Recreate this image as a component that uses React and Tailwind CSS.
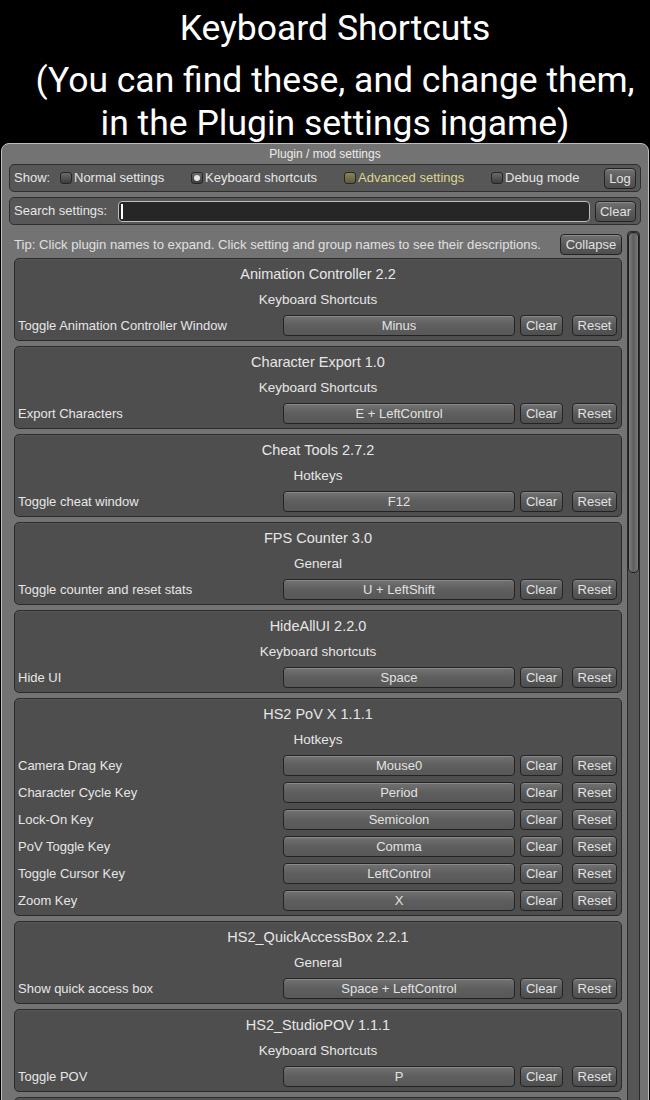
import React from "react";

const cards = [
  { title: "Animation Controller 2.2", group: "Keyboard Shortcuts", rows: [["Toggle Animation Controller Window", "Minus"]] },
  { title: "Character Export 1.0", group: "Keyboard Shortcuts", rows: [["Export Characters", "E + LeftControl"]] },
  { title: "Cheat Tools 2.7.2", group: "Hotkeys", rows: [["Toggle cheat window", "F12"]] },
  { title: "FPS Counter 3.0", group: "General", rows: [["Toggle counter and reset stats", "U + LeftShift"]] },
  { title: "HideAllUI 2.2.0", group: "Keyboard shortcuts", rows: [["Hide UI", "Space"]] },
  {
    title: "HS2 PoV X 1.1.1",
    group: "Hotkeys",
    rows: [
      ["Camera Drag Key", "Mouse0"],
      ["Character Cycle Key", "Period"],
      ["Lock-On Key", "Semicolon"],
      ["PoV Toggle Key", "Comma"],
      ["Toggle Cursor Key", "LeftControl"],
      ["Zoom Key", "X"],
    ],
  },
  { title: "HS2_QuickAccessBox 2.2.1", group: "General", rows: [["Show quick access box", "Space + LeftControl"]] },
  { title: "HS2_StudioPOV 1.1.1", group: "Keyboard Shortcuts", rows: [["Toggle POV", "P"]] },
];

function Btn({ children, className = "" }) {
  return (
    <div
      className={
        "flex h-[21px] shrink-0 items-center justify-center rounded-[4px] border border-[#232323] bg-gradient-to-b from-[#727272] via-[#5a5a5a] to-[#4e4e4e] text-[13px] leading-none text-[#e2e2e2] shadow-[inset_0_1px_0_rgba(255,255,255,0.18)] " +
        className
      }
    >
      {children}
    </div>
  );
}

function Radio({ checked, yellow }) {
  return (
    <div
      className={
        "mr-[2px] flex h-[12px] w-[12px] shrink-0 items-center justify-center rounded-[3px] border border-[#262626] " +
        (yellow
          ? "bg-gradient-to-b from-[#8a8459] to-[#5f5a3a]"
          : "bg-gradient-to-b from-[#6a6a6a] to-[#3e3e3e]")
      }
    >
      {checked && <div className="h-[6px] w-[6px] rounded-full bg-[#e6e6e6]" />}
    </div>
  );
}

function Card({ card }) {
  return (
    <div className="flex shrink-0 flex-col rounded-[5px] border border-[#2b2b2b] bg-[#4e4e4e] pt-[3px] pb-[1px] shadow-[inset_0_1px_0_rgba(255,255,255,0.06)]">
      <div className="flex h-[26px] items-center justify-center text-[14.5px] text-[#e6e6e6]">{card.title}</div>
      <div className="flex h-[24px] items-center justify-center text-[13.5px] text-[#e6e6e6]">{card.group}</div>
      {card.rows.map(([label, key]) => (
        <div key={label} className="flex h-[27px] items-center pl-[3px] pr-[4px]">
          <div className="flex-1 text-[13px] text-[#e6e6e6]">{label}</div>
          <Btn className="w-[232px] from-[#7c7c7c] via-[#5e5e5e] to-[#585858]">{key}</Btn>
          <Btn className="ml-[5px] w-[43px]">Clear</Btn>
          <Btn className="ml-[9px] w-[45px]">Reset</Btn>
        </div>
      ))}
    </div>
  );
}

export default function App() {
  return (
    <div
      className="h-[1100px] w-[650px] overflow-hidden bg-black"
      style={{ fontFamily: '"Liberation Sans", Arial, sans-serif' }}
    >
      <div
        className="flex h-[143px] flex-col items-center pl-[20px] pt-[6px] text-[35.5px] leading-[44px] text-white"
        style={{ fontFamily: 'Roboto, "Liberation Sans", sans-serif' }}
      >
        <div>Keyboard Shortcuts</div>
        <div className="mt-[8px] whitespace-nowrap">(You can find these, and change them,</div>
        <div className="-mt-[1px] whitespace-nowrap">in the Plugin settings ingame)</div>
      </div>

      <div className="mx-[1px] flex flex-col rounded-t-[8px] border border-[#bdbdbd] bg-[#737373] px-[7px] pb-[20px]">
        <div className="flex h-[20px] shrink-0 items-center justify-center text-[12px] text-[#ececec]">Plugin / mod settings</div>

        <div className="flex h-[28px] shrink-0 items-center rounded-[5px] border border-[#2f2f2f] bg-[#575757] pl-[4px] pr-[4px] text-[13px] text-[#e6e6e6]">
          <div className="w-[46px]">Show:</div>
          <div className="flex w-[131px] items-center">
            <Radio />
            Normal settings
          </div>
          <div className="flex w-[153px] items-center">
            <Radio checked />
            Keyboard shortcuts
          </div>
          <div className="flex w-[147px] items-center text-[#dcd68e]">
            <Radio yellow />
            Advanced settings
          </div>
          <div className="flex flex-1 items-center">
            <Radio />
            Debug mode
          </div>
          <Btn className="w-[32px]">Log</Btn>
        </div>

        <div className="mt-[5px] flex h-[28px] shrink-0 items-center rounded-[5px] border border-[#2f2f2f] bg-[#575757] pl-[4px] pr-[4px] text-[13px] text-[#e6e6e6]">
          <div className="w-[104px]">Search settings:</div>
          <div className="flex h-[21px] flex-1 items-center rounded-[4px] border border-[#bcbcbc] bg-[#262626] pl-[2px]">
            <div className="h-[15px] w-[2px] bg-white" />
          </div>
          <Btn className="ml-[5px] w-[41px]">Clear</Btn>
        </div>

        <div className="mt-[6px] flex">
          <div className="flex flex-1 flex-col pl-[5px]">
            <div className="flex h-[27px] shrink-0 items-center">
              <div className="flex-1 text-[13.15px] text-[#e0e0e0]">
                Tip: Click plugin names to expand. Click setting and group names to see their descriptions.
              </div>
              <Btn className="w-[62px]">Collapse</Btn>
            </div>
            <div className="flex flex-col gap-[5px]">
              {cards.map((c) => (
                <Card key={c.title} card={c} />
              ))}
              <Card card={{ title: "", group: "", rows: [] }} />
            </div>
          </div>
          <div className="ml-[5px] mr-[1px] flex w-[13px] flex-col rounded-t-[4px] border border-[#2a2a2a] bg-[#555555]">
            <div className="h-[341px] shrink-0 rounded-[5px] border border-[#1e1e1e] bg-gradient-to-r from-[#7e7e7e] via-[#5e5e5e] to-[#7a7a7a]" />
          </div>
        </div>
      </div>
    </div>
  );
}
